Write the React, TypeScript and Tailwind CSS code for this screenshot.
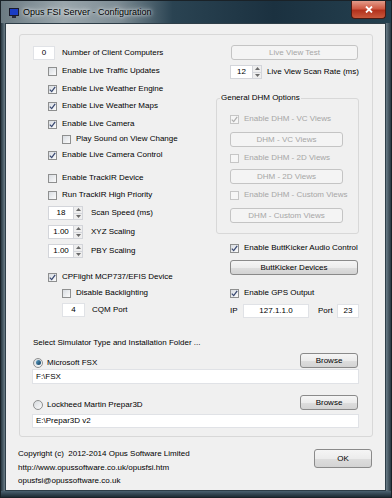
import React from 'react';

interface CheckProps {
    checked?: boolean;
    disabled?: boolean;
}

function CheckBox({ checked, disabled }: CheckProps) {
    return (
        <span
            className={`w-[9px] h-[9px] border flex items-center justify-center shrink-0 ${
                disabled
                    ? 'border-[#c6c6c6] bg-[#f6f6f6]'
                    : 'border-[#8e8f8f] bg-linear-to-br from-[#d9dde2] to-[#fbfbfb]'
            }`}
        >
            {checked && (
                <svg width="7" height="7" viewBox="0 0 7 7">
                    <path
                        d="M0.8 3.6 L2.7 5.6 L6.2 0.9"
                        stroke={disabled ? '#b0b0b0' : '#3a4a72'}
                        strokeWidth="1.3"
                        fill="none"
                    />
                </svg>
            )}
        </span>
    );
}

function CheckRow({
                      label,
                      checked,
                      disabled,
                      className = ''
                  }: CheckProps & { label: string; className?: string }) {
    return (
        <div className={`flex items-center h-[12px] ${className}`}>
            <CheckBox checked={checked} disabled={disabled} />
            <span className={`ml-[5px] whitespace-nowrap ${disabled ? 'text-[#a6a6a6]' : ''}`}>{label}</span>
        </div>
    );
}

function Radio({ checked }: { checked?: boolean }) {
    return (
        <span className="w-[10px] h-[10px] rounded-full border border-[#8e8f8f] bg-linear-to-br from-[#d6dade] to-[#fafafa] flex items-center justify-center shrink-0">
            {checked && <span className="w-[5px] h-[5px] rounded-full bg-linear-to-br from-[#5fa3c9] to-[#0f3c5c]" />}
        </span>
    );
}

function Button({
                    children,
                    disabled,
                    className = ''
                }: {
    children: React.ReactNode;
    disabled?: boolean;
    className?: string;
}) {
    const enabledClass =
        'border-[#8a8a8a] bg-[linear-gradient(#f5f5f5,#ececec_50%,#dedede_51%,#d3d3d3)] text-black';
    const disabledClass = 'border-[#c4c4c4] bg-[#f4f4f4] text-[#a6a6a6]';
    return (
        <div
            className={`h-[15px] border rounded-[3px] flex items-center justify-center whitespace-nowrap ${
                disabled ? disabledClass : enabledClass
            } ${className}`}
        >
            {children}
        </div>
    );
}

function TextBox({ value, className = '' }: { value: string; className?: string }) {
    return (
        <div className={`h-[14px] bg-white border border-[#e0e2e6] flex items-center ${className}`}>
            {value}
        </div>
    );
}

function Spinner({ value, className = '' }: { value: string; className?: string }) {
    return (
        <div className={`h-[14px] bg-white border border-[#d3d5da] flex ${className}`}>
            <span className="flex-1 flex items-center justify-center">{value}</span>
            <span className="w-[9px] flex flex-col border-l border-[#d3d5da] bg-[#eeeeee]">
                <span className="flex-1 flex items-center justify-center border-b border-[#d3d5da]">
                    <svg width="5" height="3" viewBox="0 0 5 3">
                        <path d="M0 3 L2.5 0 L5 3 Z" fill="#6a6a6a" />
                    </svg>
                </span>
                <span className="flex-1 flex items-center justify-center">
                    <svg width="5" height="3" viewBox="0 0 5 3">
                        <path d="M0 0 L2.5 3 L5 0 Z" fill="#6a6a6a" />
                    </svg>
                </span>
            </span>
        </div>
    );
}

function TitleBar() {
    return (
        <div className="h-[22px] flex items-start shrink-0 bg-[linear-gradient(90deg,#6b7a82_0%,#9aa6ac_16%,#7e8d95_30%,#2a4352_44%,#1b3140_70%,#24404f_100%)]">
            <svg className="ml-[8px] mt-[7px]" width="10" height="10" viewBox="0 0 10 10">
                <rect x="0.5" y="0.5" width="9" height="7" fill="#1b3cc4" stroke="#1a1a2a" />
                <rect x="3" y="8" width="4" height="2" fill="#2a2a3a" />
            </svg>
            <span className="ml-[4px] mt-[5px] text-[9px] leading-[12px] text-black [text-shadow:0_0_6px_#ffffff,0_0_3px_#e8eef0]">
                Opus FSI Server - Configuration
            </span>
            <div className="ml-auto mr-[5px] w-[35px] h-[18px] rounded-b-[4px] border border-t-0 border-[#4a1a12] bg-[linear-gradient(#e29b8a,#cf5a44_45%,#b3321d_55%,#c9583c)] flex items-center justify-center">
                <svg width="8" height="7" viewBox="0 0 8 7">
                    <path d="M1 0.5 L7 6.5 M7 0.5 L1 6.5" stroke="#ffffff" strokeWidth="1.8" />
                </svg>
            </div>
        </div>
    );
}

export default function App() {
    return (
        <div className="w-[392px] h-[498px] flex flex-col overflow-hidden bg-[#3d5361] border border-[#1a2228] font-['Liberation_Sans',Arial,sans-serif] text-[8px] leading-[10px] text-black">
            <TitleBar />
            <div className="flex h-[468px] shrink-0">
                <div className="w-[4px] bg-linear-to-r from-[#2a3a44] to-[#6a7c87]" />
                <div className="w-[381px] bg-[#f0f0f0] border border-[#2e3e48] pl-[13px] pr-[12px] pt-[10px] flex flex-col">
                    {/* main group box */}
                    <div className="w-[354px] border border-[#d8d8d8] rounded-[3px] pl-[13px] pr-[13px] pt-[10px] pb-[8px] flex flex-col">
                        <div className="flex items-start">
                            {/* left column */}
                            <div className="w-[183px] mt-[1px] flex flex-col">
                                <div className="flex items-center h-[14px]">
                                    <TextBox value="0" className="w-[22px] justify-center" />
                                    <span className="ml-[7px]">Number of Client Computers</span>
                                </div>
                                <CheckRow label="Enable Live Traffic Updates" className="mt-[5px] ml-[15px]" />
                                <CheckRow label="Enable Live Weather Engine" checked className="mt-[6px] ml-[15px]" />
                                <CheckRow label="Enable Live Weather Maps" checked className="mt-[5px] ml-[15px]" />
                                <CheckRow label="Enable Live Camera" checked className="mt-[6px] ml-[15px]" />
                                <CheckRow label="Play Sound on View Change" className="mt-[3px] ml-[29px]" />
                                <CheckRow label="Enable Live Camera Control" checked className="mt-[4px] ml-[15px]" />
                                <CheckRow label="Enable TrackIR Device" className="mt-[11px] ml-[15px]" />
                                <CheckRow label="Run TrackIR High Priority" className="mt-[5px] ml-[15px]" />
                                <div className="flex items-center mt-[5px] ml-[15px]">
                                    <Spinner value="18" className="w-[35px]" />
                                    <span className="ml-[8px]">Scan Speed (ms)</span>
                                </div>
                                <div className="flex items-center mt-[5px] ml-[15px]">
                                    <Spinner value="1.00" className="w-[35px]" />
                                    <span className="ml-[8px]">XYZ Scaling</span>
                                </div>
                                <div className="flex items-center mt-[5px] ml-[15px]">
                                    <Spinner value="1.00" className="w-[35px]" />
                                    <span className="ml-[8px]">PBY Scaling</span>
                                </div>
                                <CheckRow label="CPFlight MCP737/EFIS Device" checked className="mt-[13px] ml-[15px]" />
                                <CheckRow label="Disable Backlighting" className="mt-[4px] ml-[29px]" />
                                <div className="flex items-center h-[14px] mt-[4px] ml-[29px]">
                                    <TextBox value="4" className="w-[23px] justify-center" />
                                    <span className="ml-[7px]">CQM Port</span>
                                </div>
                            </div>

                            {/* right column */}
                            <div className="w-[143px] flex flex-col">
                                <Button disabled className="ml-[15px] w-[127px]">
                                    Live View Test
                                </Button>
                                <div className="flex items-center mt-[5px] ml-[14px]">
                                    <Spinner value="12" className="w-[32px]" />
                                    <span className="ml-[5px] whitespace-nowrap">Live View Scan Rate (ms)</span>
                                </div>
                                <fieldset className="mt-[14px] border border-[#d8d8d8] rounded-[3px] pb-[10px]">
                                    <legend className="ml-[3px] px-[1px] leading-[10px]">General DHM Options</legend>
                                    <div className="flex flex-col pl-[13px]">
                                        <CheckRow label="Enable DHM - VC Views" checked disabled className="mt-[10px]" />
                                        <Button disabled className="mt-[7px] w-[113px]">
                                            DHM - VC Views
                                        </Button>
                                        <CheckRow label="Enable DHM - 2D Views" disabled className="mt-[5px]" />
                                        <Button disabled className="mt-[5px] w-[113px]">
                                            DHM - 2D Views
                                        </Button>
                                        <CheckRow label="Enable DHM - Custom Views" disabled className="mt-[5px]" />
                                        <Button disabled className="mt-[7px] w-[113px]">
                                            DHM - Custom Views
                                        </Button>
                                    </div>
                                </fieldset>
                                <CheckRow label="Enable ButtKicker Audio Control" checked className="mt-[8px] ml-[14px]" />
                                <Button className="mt-[6px] ml-[14px] w-[128px]">ButtKicker Devices</Button>
                                <CheckRow label="Enable GPS Output" checked className="mt-[12px] ml-[14px]" />
                                <div className="flex items-center mt-[5px] ml-[14px]">
                                    <span className="w-[13px]">IP</span>
                                    <TextBox value="127.1.1.0" className="w-[66px] justify-center" />
                                    <span className="ml-[9px] w-[19px]">Port</span>
                                    <TextBox value="23" className="w-[22px] justify-center" />
                                </div>
                            </div>
                        </div>

                        {/* simulator selection */}
                        <div className="mt-[20px] h-[10px] flex items-center">
                            Select Simulator Type and Installation Folder ...
                        </div>
                        <div className="mt-[5px] h-[15px] flex items-center justify-between">
                            <div className="flex items-center mt-[4px]">
                                <Radio checked />
                                <span className="ml-[4px]">Microsoft FSX</span>
                            </div>
                            <Button className="w-[58px] mr-[1px]">Browse</Button>
                        </div>
                        <TextBox value="F:\FSX" className="mt-[1px] -ml-[1px] w-[327px] h-[15px] pl-[3px]" />
                        <div className="mt-[11px] h-[15px] flex items-center justify-between">
                            <div className="flex items-center mt-[5px]">
                                <Radio />
                                <span className="ml-[4px]">Lockheed Martin Prepar3D</span>
                            </div>
                            <Button className="w-[58px] mr-[1px]">Browse</Button>
                        </div>
                        <TextBox value="E:\Prepar3D v2" className="mt-[4px] -ml-[1px] w-[327px] pl-[3px]" />
                    </div>

                    {/* footer */}
                    <div className="flex justify-between items-start">
                        <div className="mt-[10px] -ml-[1px] leading-[13.5px] flex flex-col">
                            <span className="whitespace-pre">Copyright (c)  2012-2014 Opus Software Limited</span>
                            <span>http://www.opussoftware.co.uk/opusfsi.htm</span>
                            <span>opusfsi@opussoftware.co.uk</span>
                        </div>
                        <Button className="mt-[12px] mr-[1px] w-[58px] h-[19px]">OK</Button>
                    </div>
                </div>
                <div className="flex-1 bg-linear-to-r from-[#6a7c87] to-[#2a3a44]" />
            </div>
            <div className="flex-1 bg-linear-to-b from-[#4b6170] to-[#1e2c35]" />
        </div>
    );
}
